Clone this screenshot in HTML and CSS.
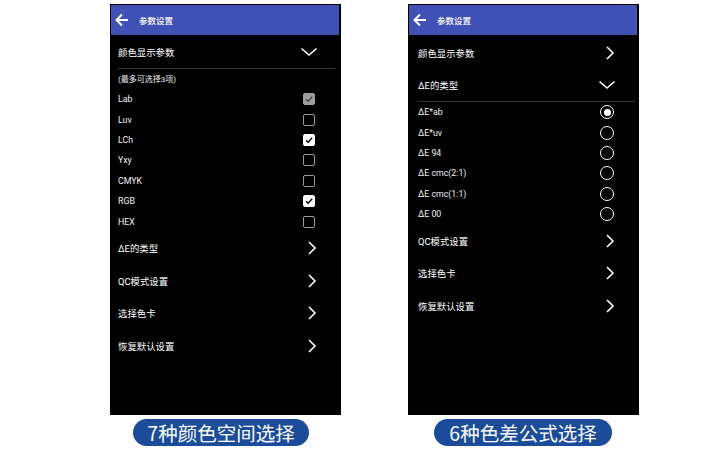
FILE: index.html
```html
<!DOCTYPE html>
<html lang="zh">
<head>
<meta charset="utf-8">
<link rel="stylesheet" href="styles.css">
</head>
<body>
<div class="stage">
  <div class="col col-a">
    <div class="phone">
      <div class="appbar">
        <svg class="back" width="16" height="16" viewBox="0 0 16 16"><path d="M14 8H3M8 2.5L2.5 8L8 13.5" fill="none" stroke="#fff" stroke-width="2"/></svg>
        <span class="title">参数设置</span>
      </div>
      <div class="list">
        <div class="row main first"><span>颜色显示参数</span><span class="ctl"><svg width="24" height="12" viewBox="0 0 24 12"><path d="M4.5 2.5L12 9L19.5 2.5" fill="none" stroke="#fff" stroke-width="1.6"/></svg></span></div>
        <div class="divider"></div>
        <div class="row note"><span>(最多可选择3项)</span></div>
        <div class="row sub"><span>Lab</span><span class="ctl"><span class="cb dis"><svg width="10" height="10" viewBox="0 0 10 10"><path d="M2 5.2L4.2 7.3L8.2 2.8" fill="none" stroke="#444" stroke-width="1.3"/></svg></span></span></div>
        <div class="row sub"><span>Luv</span><span class="ctl"><span class="cb"></span></span></div>
        <div class="row sub"><span>LCh</span><span class="ctl"><span class="cb on"><svg width="10" height="10" viewBox="0 0 10 10"><path d="M2 5.2L4.2 7.3L8.2 2.8" fill="none" stroke="#000" stroke-width="1.3"/></svg></span></span></div>
        <div class="row sub"><span>Yxy</span><span class="ctl"><span class="cb"></span></span></div>
        <div class="row sub"><span>CMYK</span><span class="ctl"><span class="cb"></span></span></div>
        <div class="row sub"><span>RGB</span><span class="ctl"><span class="cb on"><svg width="10" height="10" viewBox="0 0 10 10"><path d="M2 5.2L4.2 7.3L8.2 2.8" fill="none" stroke="#000" stroke-width="1.3"/></svg></span></span></div>
        <div class="row sub"><span>HEX</span><span class="ctl"><span class="cb"></span></span></div>
        <div class="row main"><span>ΔE的类型</span><span class="ctl"><svg width="24" height="14" viewBox="0 0 24 14"><path d="M12 1L18 7L12 13" fill="none" stroke="#fff" stroke-width="1.6"/></svg></span></div>
        <div class="row main"><span>QC模式设置</span><span class="ctl"><svg width="24" height="14" viewBox="0 0 24 14"><path d="M12 1L18 7L12 13" fill="none" stroke="#fff" stroke-width="1.6"/></svg></span></div>
        <div class="row main"><span>选择色卡</span><span class="ctl"><svg width="24" height="14" viewBox="0 0 24 14"><path d="M12 1L18 7L12 13" fill="none" stroke="#fff" stroke-width="1.6"/></svg></span></div>
        <div class="row main"><span>恢复默认设置</span><span class="ctl"><svg width="24" height="14" viewBox="0 0 24 14"><path d="M12 1L18 7L12 13" fill="none" stroke="#fff" stroke-width="1.6"/></svg></span></div>
      </div>
    </div>
    <div class="pill pill-a">7种颜色空间选择</div>
  </div>

  <div class="col col-b">
    <div class="phone">
      <div class="appbar">
        <svg class="back" width="16" height="16" viewBox="0 0 16 16"><path d="M14 8H3M8 2.5L2.5 8L8 13.5" fill="none" stroke="#fff" stroke-width="2"/></svg>
        <span class="title">参数设置</span>
      </div>
      <div class="list">
        <div class="row main b1"><span>颜色显示参数</span><span class="ctl"><svg width="24" height="14" viewBox="0 0 24 14"><path d="M12 1L18 7L12 13" fill="none" stroke="#fff" stroke-width="1.6"/></svg></span></div>
        <div class="row main b2"><span>ΔE的类型</span><span class="ctl"><svg width="24" height="12" viewBox="0 0 24 12"><path d="M4.5 2.5L12 9L19.5 2.5" fill="none" stroke="#fff" stroke-width="1.6"/></svg></span></div>
        <div class="divider"></div>
        <div class="row sub"><span>ΔE*ab</span><span class="ctl"><span class="rb on"></span></span></div>
        <div class="row sub"><span>ΔE*uv</span><span class="ctl"><span class="rb"></span></span></div>
        <div class="row sub"><span>ΔE 94</span><span class="ctl"><span class="rb"></span></span></div>
        <div class="row sub"><span>ΔE cmc(2:1)</span><span class="ctl"><span class="rb"></span></span></div>
        <div class="row sub"><span>ΔE cmc(1:1)</span><span class="ctl"><span class="rb"></span></span></div>
        <div class="row sub"><span>ΔE 00</span><span class="ctl"><span class="rb"></span></span></div>
        <div class="row main"><span>QC模式设置</span><span class="ctl"><svg width="24" height="14" viewBox="0 0 24 14"><path d="M12 1L18 7L12 13" fill="none" stroke="#fff" stroke-width="1.6"/></svg></span></div>
        <div class="row main"><span>选择色卡</span><span class="ctl"><svg width="24" height="14" viewBox="0 0 24 14"><path d="M12 1L18 7L12 13" fill="none" stroke="#fff" stroke-width="1.6"/></svg></span></div>
        <div class="row main"><span>恢复默认设置</span><span class="ctl"><svg width="24" height="14" viewBox="0 0 24 14"><path d="M12 1L18 7L12 13" fill="none" stroke="#fff" stroke-width="1.6"/></svg></span></div>
      </div>
    </div>
    <div class="pill pill-b">6种色差公式选择</div>
  </div>
</div>
</body>
</html>
```

FILE: styles.css
```css
html, body {
  margin: 0;
  padding: 0;
  background: #fff;
  width: 726px;
  height: 450px;
  overflow: hidden;
  font-family: Roboto, "Noto Sans CJK SC", sans-serif;
}
.stage {
  display: flex;
  gap: 67px;
  padding: 4px 0 0 110px;
}
.col {
  width: 231px;
  display: flex;
  flex-direction: column;
}
.phone {
  height: 411px;
  background: #000;
  padding: 1px 2px 0 1px;
  box-sizing: border-box;
  display: flex;
  flex-direction: column;
}
.appbar {
  height: 30px;
  background: #3f51b5;
  display: flex;
  align-items: center;
  padding-left: 3px;
  gap: 9px;
  flex: none;
}
.back { flex: none; }
.title {
  color: #fff;
  font-size: 8.5px;
  font-family: "Noto Sans CJK SC", sans-serif;
  font-weight: 500;
}
.list {
  padding-top: 1px;
  display: flex;
  flex-direction: column;
}
.row {
  display: flex;
  align-items: center;
  justify-content: space-between;
  padding-left: 7px;
  color: #fff;
}
.col-b .row { padding-left: 9px; }
.row.main {
  height: 32.7px;
  font-size: 9.4px;
}
.row.main.first { height: 32px; }
.row.main.b1 { height: 33px; }
.row.main.b2 { height: 32px; }
.row.sub {
  height: 20.4px;
  font-size: 8.8px;
  color: #f0f0f0;
}
.row.note {
  height: 20px;
  font-size: 8px;
  color: #f0f0f0;
  padding-bottom: 1px;
  box-sizing: border-box;
}
.ctl {
  width: 24px;
  margin-right: 18px;
  display: flex;
  justify-content: center;
  align-items: center;
}
.ctl svg { display: block; }
.divider {
  height: 1px;
  background: #353535;
  margin: 0 4px 0 7px;
  flex: none;
}
.col-b .divider { margin: 0 2px 0 9px; }
.cb {
  width: 12px;
  height: 12px;
  box-sizing: border-box;
  border: 1.4px solid #9a9a9a;
  border-radius: 2px;
  display: flex;
  align-items: center;
  justify-content: center;
}
.cb.on {
  background: #fff;
  border-color: #fff;
}
.cb.dis {
  background: #9e9e9e;
  border-color: #9e9e9e;
}
.rb {
  width: 14px;
  height: 14px;
  box-sizing: border-box;
  border: 1.6px solid #fff;
  border-radius: 50%;
  display: flex;
  align-items: center;
  justify-content: center;
}
.rb.on::after {
  content: "";
  width: 7px;
  height: 7px;
  border-radius: 50%;
  background: #fff;
}
.pill {
  margin-top: 4px;
  height: 27px;
  border-radius: 14px;
  background: #1a4c9b;
  color: #fff;
  font-size: 19.5px;
  font-family: "Noto Sans CJK SC", sans-serif;
  font-weight: 400;
  display: flex;
  align-items: center;
  justify-content: center;
  line-height: 1;
}
.pill-a { width: 176px; margin-left: 23px; }
.pill-b { width: 178px; margin-left: 26px; }
```
